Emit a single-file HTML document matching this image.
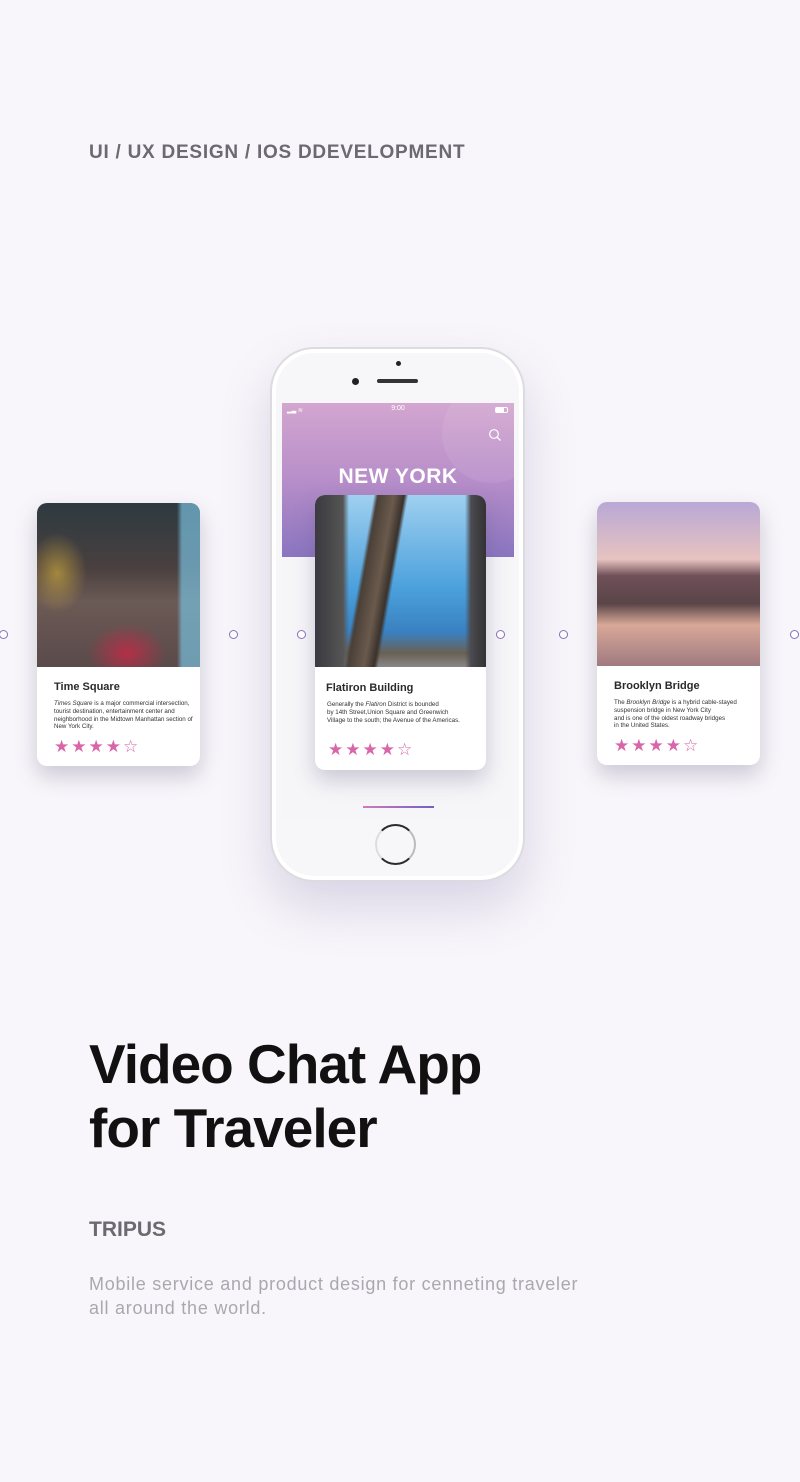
<!DOCTYPE html>
<html><head><meta charset="utf-8"><style>
*{margin:0;padding:0;box-sizing:border-box}
body{width:800px;height:1482px;background:#f8f6fa;position:relative;overflow:hidden;font-family:"Liberation Sans",sans-serif}
.abs{position:absolute}
.card{position:absolute;background:#fff;border-radius:10px;overflow:hidden;box-shadow:0 10px 22px rgba(90,80,120,.28)}
.card h3{position:absolute;font-size:11px;font-weight:bold;color:#2a2a2e}
.card p{position:absolute;font-size:6.2px;line-height:7.8px;color:#333}
.stars{position:absolute;color:#d966a8;font-size:17px;letter-spacing:2px}
.dot{position:absolute;top:630px;width:9px;height:9px;border:1.3px solid #8b6fc0;border-radius:50%;background:#fff;z-index:5}
</style></head><body>
<div class="abs" style="left:89px;top:142px;font-size:19px;font-weight:bold;color:#6b6a70;letter-spacing:.75px">UI / UX DESIGN / IOS DDEVELOPMENT</div>

<div class="dot" style="left:-1px"></div>
<div class="dot" style="left:229px"></div>
<div class="dot" style="left:297px"></div>
<div class="dot" style="left:496px"></div>
<div class="dot" style="left:559px"></div>
<div class="dot" style="left:790px"></div>

<!-- left card -->
<div class="card" style="left:37px;top:503px;width:163px;height:263px">
 <div class="abs" style="left:0;top:0;width:163px;height:164px;background:
 radial-gradient(ellipse 40px 30px at 90px 150px,rgba(200,40,70,.8),transparent),
 linear-gradient(90deg,transparent 0,transparent 140px,rgba(120,190,220,.7) 145px,rgba(120,190,220,.7) 163px),
 radial-gradient(ellipse 30px 40px at 20px 70px,rgba(220,180,60,.6),transparent),
 linear-gradient(180deg,#2d3a40 0%,#4a4040 40%,#6b5a55 60%,#5a4a4a 100%)"></div>
 <h3 style="left:17px;top:178px">Time Square</h3>
 <p style="left:17px;top:197px;width:145px"><i>Times Square</i> is a major commercial intersection, tourist destination, entertainment center and neighborhood in the Midtown Manhattan section of New York City.</p>
 <div class="stars" style="left:17px;top:234px">★★★★☆</div>
</div>

<!-- right card -->
<div class="card" style="left:597px;top:502px;width:163px;height:263px">
 <div class="abs" style="left:0;top:0;width:163px;height:164px;background:
 linear-gradient(180deg,#b9a8d6 0%,#e7c3c0 35%,#6f5058 45%,#5a4548 62%,#d8a898 75%,#a07a80 100%)"></div>
 <h3 style="left:17px;top:178px">Brooklyn Bridge</h3>
 <p style="left:17px;top:197px;width:145px">The <i>Brooklyn Bridge</i> is a hybrid cable-stayed<br>suspension bridge in New York City<br>and is one of the oldest roadway bridges<br>in the United States.</p>
 <div class="stars" style="left:17px;top:234px">★★★★☆</div>
</div>

<!-- phone -->
<div class="abs" style="left:270px;top:347px;width:255px;height:535px;border-radius:44px;background:#f7f7f9;border:2px solid #dcdce0;box-shadow:0 25px 50px rgba(110,90,160,.22),inset 0 0 0 4px #fff"></div>
<div class="abs" style="left:396px;top:361px;width:5px;height:5px;border-radius:50%;background:#222"></div>
<div class="abs" style="left:352px;top:378px;width:7px;height:7px;border-radius:50%;background:#222"></div>
<div class="abs" style="left:377px;top:379px;width:41px;height:4px;border-radius:2px;background:#333"></div>
<div class="abs" style="left:282px;top:403px;width:232px;height:417px;background:#f6f6f9;overflow:hidden">
 <div class="abs" style="left:0;top:0;width:232px;height:154px;background:linear-gradient(180deg,#d3a6d0 0%,#b78ec9 50%,#8a75c0 100%)"></div>
 <div class="abs" style="left:160px;top:-20px;width:100px;height:100px;border-radius:50%;background:rgba(255,255,255,.08)"></div>
 <div class="abs" style="left:0;top:2px;width:232px;text-align:center;color:#fff;font-size:7px">9:00</div>
 <div class="abs" style="left:5px;top:4px;color:#fff;font-size:6px">▂▃ ≋</div>
 <div class="abs" style="left:213px;top:4px;width:13px;height:6px;border:1px solid #fff;border-radius:2px"><div style="width:8px;height:4px;background:#fff"></div></div>
 <svg class="abs" style="left:206px;top:25px" width="14" height="14" viewBox="0 0 14 14"><circle cx="6" cy="6" r="4.3" fill="none" stroke="#fff" stroke-width="1.2"/><path d="M9 9l3.5 3.5" stroke="#fff" stroke-width="1.3"/></svg>
 <div class="abs" style="left:0;top:62px;width:232px;text-align:center;color:#fff;font-size:21px;font-weight:bold;letter-spacing:.5px">NEW YORK</div>
 <div class="abs" style="left:81px;top:403px;width:71px;height:2px;background:linear-gradient(90deg,#d47ab8,#6e62c4)"></div>
</div>
<div class="abs" style="left:375px;top:824px;width:41px;height:41px;border-radius:50%;border:2px solid #2b2b2b;border-left-color:#ddd;border-right-color:#bbb"></div>

<!-- center card -->
<div class="card" style="left:315px;top:495px;width:171px;height:275px">
 <div class="abs" style="left:0;top:0;width:171px;height:172px;background:
 linear-gradient(100deg,transparent 0,transparent 58px,#4a4038 62px,#6a5a4c 78px,#3a322c 88px,transparent 92px),
 linear-gradient(90deg,#3a3a40 0,#555 28px,transparent 34px,transparent 150px,#4a4a50 156px,#333 171px),
 linear-gradient(180deg,#9fd0f0 0%,#4aa0dc 55%,#3a80c0 80%,#6a6055 92%,#888 100%)"></div>
 <h3 style="left:11px;top:187px">Flatiron Building</h3>
 <p style="left:12px;top:206px;width:155px">Generally the <i>Flatiron</i> District is bounded<br>by 14th Street,Union Square and Greenwich<br>Village to the south; the Avenue of the Americas.</p>
 <div class="stars" style="left:13px;top:245px">★★★★☆</div>
</div>

<div class="abs" style="left:89px;top:1032px;font-size:55px;line-height:64px;font-weight:bold;color:#111;letter-spacing:-1px">Video Chat App<br>for Traveler</div>
<div class="abs" style="left:89px;top:1218px;font-size:21px;font-weight:bold;color:#6b6a70">TRIPUS</div>
<div class="abs" style="left:89px;top:1272px;font-size:18px;line-height:24px;color:#a9a8ae;letter-spacing:.75px">Mobile service and product design for cenneting traveler<br>all around the world.</div>
</body></html>
